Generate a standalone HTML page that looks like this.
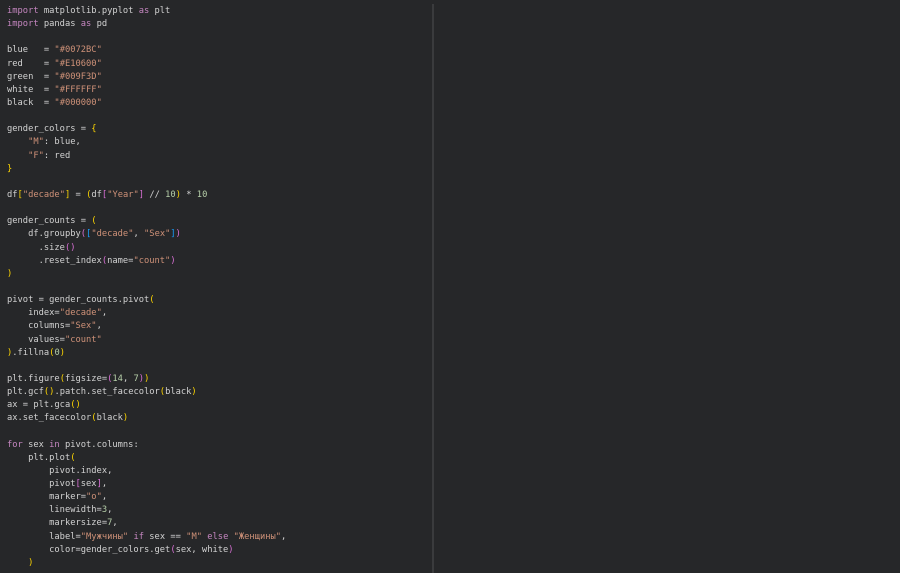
<!DOCTYPE html>
<html><head><meta charset="utf-8"><style>
html,body{margin:0;padding:0;background:#262729;width:900px;height:573px;overflow:hidden}
pre{position:absolute;left:7px;top:5px;margin:0;font-family:"DejaVu Sans Mono","Liberation Mono",monospace;font-size:8.75px;line-height:13.14px;color:#d2d2d2}
.k{color:#c586c0}.s{color:#ce9178}.n{color:#b5cea8}.y{color:#ffd700}.p{color:#da70d6}.b{color:#179fff}
.div{position:absolute;left:432px;top:4px;width:2px;height:569px;background:#3a3b3d}
</style></head><body>
<div class="div"></div>
<pre><span class="k">import</span> matplotlib.pyplot <span class="k">as</span> plt
<span class="k">import</span> pandas <span class="k">as</span> pd

blue   = <span class="s">"#0072BC"</span>
red    = <span class="s">"#E10600"</span>
green  = <span class="s">"#009F3D"</span>
white  = <span class="s">"#FFFFFF"</span>
black  = <span class="s">"#000000"</span>

gender_colors = <span class="y">{</span>
    <span class="s">"M"</span>: blue,
    <span class="s">"F"</span>: red
<span class="y">}</span>

df<span class="y">[</span><span class="s">"decade"</span><span class="y">]</span> = <span class="y">(</span>df<span class="p">[</span><span class="s">"Year"</span><span class="p">]</span> // <span class="n">10</span><span class="y">)</span> * <span class="n">10</span>

gender_counts = <span class="y">(</span>
    df.groupby<span class="p">(</span><span class="b">[</span><span class="s">"decade"</span>, <span class="s">"Sex"</span><span class="b">]</span><span class="p">)</span>
      .size<span class="p">()</span>
      .reset_index<span class="p">(</span>name=<span class="s">"count"</span><span class="p">)</span>
<span class="y">)</span>

pivot = gender_counts.pivot<span class="y">(</span>
    index=<span class="s">"decade"</span>,
    columns=<span class="s">"Sex"</span>,
    values=<span class="s">"count"</span>
<span class="y">)</span>.fillna<span class="y">(</span><span class="n">0</span><span class="y">)</span>

plt.figure<span class="y">(</span>figsize=<span class="p">(</span><span class="n">14</span>, <span class="n">7</span><span class="p">)</span><span class="y">)</span>
plt.gcf<span class="y">()</span>.patch.set_facecolor<span class="y">(</span>black<span class="y">)</span>
ax = plt.gca<span class="y">()</span>
ax.set_facecolor<span class="y">(</span>black<span class="y">)</span>

<span class="k">for</span> sex <span class="k">in</span> pivot.columns:
    plt.plot<span class="y">(</span>
        pivot.index,
        pivot<span class="p">[</span>sex<span class="p">]</span>,
        marker=<span class="s">"o"</span>,
        linewidth=<span class="n">3</span>,
        markersize=<span class="n">7</span>,
        label=<span class="s">"Мужчины"</span> <span class="k">if</span> sex == <span class="s">"M"</span> <span class="k">else</span> <span class="s">"Женщины"</span>,
        color=gender_colors.get<span class="p">(</span>sex, white<span class="p">)</span>
    <span class="y">)</span></pre>
</body></html>
